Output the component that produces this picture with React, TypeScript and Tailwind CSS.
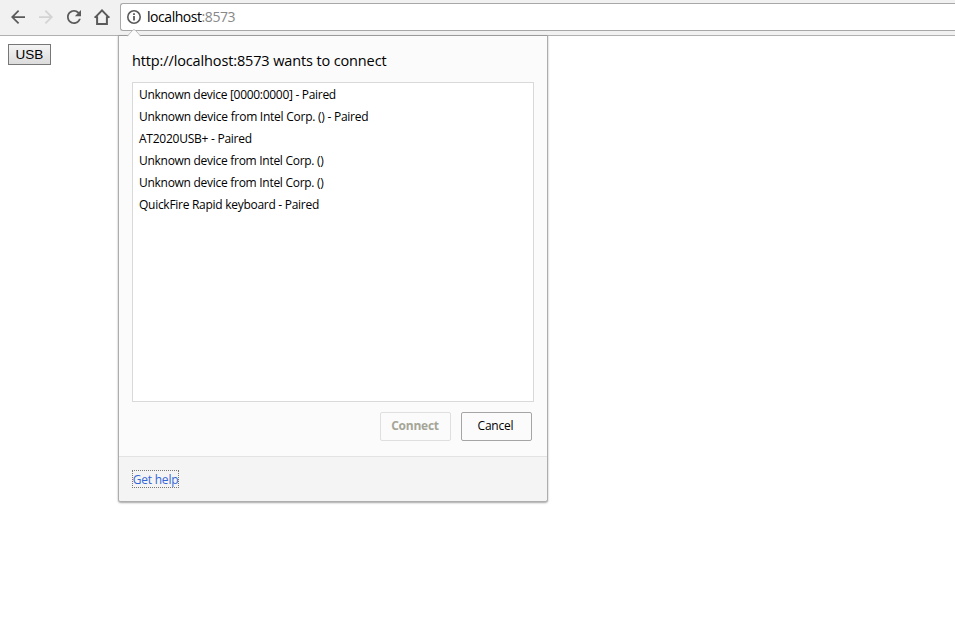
import React from "react";

const devices = [
  { name: "Unknown device [0000:0000] - Paired", spacing: "tracking-[-0.3px]" },
  { name: "Unknown device from Intel Corp. () - Paired", spacing: "tracking-[-0.25px]" },
  { name: "AT2020USB+ - Paired", spacing: "tracking-[-0.25px]" },
  { name: "Unknown device from Intel Corp. ()", spacing: "tracking-[-0.28px]" },
  { name: "Unknown device from Intel Corp. ()", spacing: "tracking-[-0.28px]" },
  { name: "QuickFire Rapid keyboard - Paired", spacing: "tracking-[-0.28px]" },
];

function Glyph({ d, className }: { d: string; className: string }) {
  return (
    <svg viewBox="4 4 16 16" className={`h-[14px] w-[14px] shrink-0 ${className}`} fill="currentColor">
      <path d={d} />
    </svg>
  );
}

function Toolbar() {
  return (
    <header className="flex h-9 items-start border-b border-[#b1b1b1] bg-[#f1f1f1] pl-[11px] text-[#5a5a5a]">
      <Glyph className="mt-[10px]" d="M20 11H7.83l5.59-5.59L12 4l-8 8 8 8 1.41-1.41L7.83 13H20v-2z" />
      <Glyph className="mt-[10px] ml-[14px] text-[#d3d3d3]" d="M12 4l-1.41 1.41L16.17 11H4v2h12.17l-5.58 5.59L12 20l8-8z" />
      <Glyph
        className="mt-[10px] ml-[14px]"
        d="M17.65 6.35C16.2 4.9 14.21 4 12 4c-4.42 0-7.99 3.58-7.99 8s3.57 8 7.99 8c3.73 0 6.84-2.55 7.73-6h-2.08c-.82 2.33-3.04 4-5.65 4-3.31 0-6-2.69-6-6s2.69-6 6-6c1.66 0 3.14.69 4.22 1.78L13 11h7V4l-2.35 2.35z"
      />
      <svg viewBox="0 0 16 16" className="mt-[9px] ml-[13px] h-4 w-4 shrink-0" fill="none" stroke="currentColor" strokeWidth="2">
        <path d="M1 8.6 8 1.4l7 7.2M3.1 7.5V15h9.8V7.5" />
        <path d="M.5 8.3h3M12.5 8.3h3" strokeWidth="1.4" />
      </svg>
      <div className="mt-[3px] ml-[10px] flex h-7 flex-1 items-center rounded-l-[3px] border border-r-0 border-[#a8a8a8] bg-white pl-[6px]">
        <svg viewBox="0 0 14 14" className="h-[14px] w-[14px] shrink-0" fill="none" stroke="currentColor" strokeWidth="1.6">
          <circle cx="7" cy="7" r="6.2" />
          <path d="M7 6v4.5M7 3.3V5" strokeWidth="1.8" />
        </svg>
        <span className="ml-[6px] text-[14px] leading-5 tracking-[-0.45px] text-black">
          localhost<span className="text-[#888]">:8573</span>
        </span>
      </div>
    </header>
  );
}

function ChooserBubble() {
  return (
    <section className="absolute top-[35px] left-[118px] flex h-[467px] w-[430px] flex-col rounded-b-[3px] border border-[#adadad] border-t-[#9a9a9a] bg-[#fbfbfb] shadow-[0_1px_2px_rgba(0,0,0,0.35)]">
      <svg viewBox="0 0 14 7" className="absolute -top-[7px] left-[8px] h-[8px] w-[14px]" preserveAspectRatio="none">
        <path d="M0 7 6 .8h2L14 7z" fill="#fbfbfb" />
        <path d="M0 6.5 6 .8h2l6 5.7" fill="none" stroke="#b8b8b8" strokeWidth=".8" />
      </svg>
      <div className="flex flex-1 flex-col px-[13px] pt-[13px]">
        <h1 className="h-[33px] text-[14.5px] leading-6 tracking-[-0.13px] whitespace-nowrap text-black">
          <span>http://localhost:8573 wants to connect</span>
        </h1>
        <ul className="h-[320px] w-[402px] border border-[#d9d9d9] bg-white px-[6px] pt-px text-[12px] leading-[22px] text-black">
          {devices.map((device, index) => (
            <li key={index} className="h-[22px] whitespace-nowrap">
              <span className={device.spacing}>{device.name}</span>
            </li>
          ))}
        </ul>
        <div className="mt-[10px] mr-[2px] flex justify-end gap-[10px] text-[12px]">
          <button className="h-[29px] w-[71px] rounded-[2px] border border-[#dfdfdf] pr-px pb-px font-bold tracking-[-0.25px] text-[#a5a597]">
            Connect
          </button>
          <button className="h-[29px] w-[71px] rounded-[2px] border border-[#a5a5a5] pr-[2px] pb-px tracking-[-0.2px] text-black">
            Cancel
          </button>
        </div>
      </div>
      <footer className="h-[45px] rounded-b-[2px] border-t border-[#e3e3e3] bg-[#f4f4f4] pt-[13px] pl-[13px]">
        <a className="flex h-[18px] w-[47px] items-center justify-center border border-dotted border-[#777] pt-[2px] text-[12px] leading-4 tracking-[-0.2px] whitespace-nowrap text-[#3367d6]">
          Get help
        </a>
      </footer>
    </section>
  );
}

export default function App() {
  return (
    <div className="relative h-[636px] w-[955px] overflow-hidden bg-white font-['Open_Sans','Noto_Sans',sans-serif]">
      <Toolbar />
      <main className="px-2 pt-2">
        <button className="flex h-[21px] w-[43px] items-center justify-center border border-[#777] bg-linear-to-b from-[#f4f4f4] to-[#dcdcdc] pt-px font-['Liberation_Sans',Arial,sans-serif] text-[13.5px] text-black">
          USB
        </button>
      </main>
      <ChooserBubble />
    </div>
  );
}
